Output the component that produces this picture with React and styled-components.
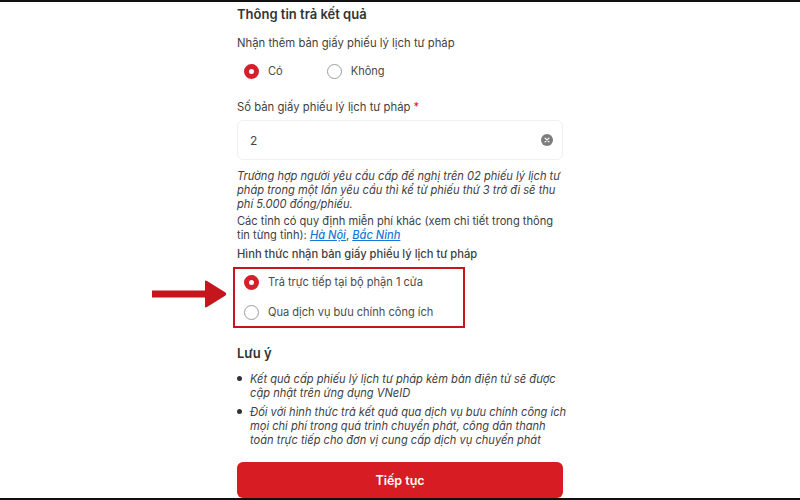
import React from 'react'
import styled, { createGlobalStyle } from 'styled-components'

const Global = createGlobalStyle`
  html, body { margin: 0; padding: 0; background: #fff; }
  body { font-family: Inter, "Noto Sans", "Liberation Sans", sans-serif; color: #3a3a3c; }
`

const Screen = styled.div`
  position: relative;
  width: 800px;
  height: 500px;
  overflow: hidden;
  background: #fff;
  box-sizing: border-box;
  border-top: 2px solid #111;
  border-bottom: 2px solid #111;
`

const Column = styled.div`
  width: 326px;
  margin-left: 237px;
`

const Heading = styled.div`
  font-size: 13px;
  line-height: 18px;
  font-weight: 600;
  color: #333;
  margin-top: ${p => p.$top}px;
`

const Label = styled.div`
  font-size: ${p => p.$strong ? 11.2 : 11.3}px;
  line-height: 16px;
  font-weight: ${p => p.$strong ? 500 : 400};
  color: #3f3f41;
  margin-top: ${p => p.$top}px;
`

const Star = styled.span`
  color: #d71920;
`

const RadioRow = styled.div`
  display: flex;
  gap: 44px;
  padding-left: 7px;
  margin-top: 12px;
`

const RadioStack = styled.div`
  position: relative;
  display: flex;
  flex-direction: column;
  gap: 14px;
  padding-left: 7px;
  margin-top: 12px;
`

const Option = styled.div`
  display: flex;
  align-items: center;
  gap: 9px;
  font-size: 11.05px;
  line-height: 16px;
  color: #4a4a4c;
`

const Dot = styled.span`
  width: 15px;
  height: 15px;
  border-radius: 50%;
  box-sizing: border-box;
  flex: none;
  background: #fff;
  border: ${p => p.$on ? '5px solid #d3202a' : '1px solid #9c9c9c'};
`

const Field = styled.div`
  display: flex;
  align-items: center;
  justify-content: space-between;
  height: 40px;
  box-sizing: border-box;
  margin-top: 5px;
  padding: 0 9px 0 12px;
  border: 1px solid #efefef;
  border-radius: 6px;
  font-size: 12px;
  color: #444;
`

const Note = styled.div`
  font-size: 11.12px;
  line-height: 14px;
  white-space: nowrap;
  color: #404042;
  margin-top: ${p => p.$top}px;
  font-style: ${p => p.$plain ? 'normal' : 'italic'};
`

const Link = styled.a`
  color: #1479d6;
  font-style: italic;
  font-weight: 500;
  text-decoration: underline;
`

const Highlight = styled.div`
  position: absolute;
  left: -4px;
  top: -7px;
  width: 232px;
  height: 61px;
  box-sizing: border-box;
  border: 2.5px solid #c4161c;
`

const Arrow = styled.svg`
  position: absolute;
  left: 152px;
  top: 278px;
`

const Bullets = styled.ul`
  list-style: none;
  margin: 10px 0 0;
  padding: 0;
  display: flex;
  flex-direction: column;
  gap: 5px;
`

const Bullet = styled.li`
  position: relative;
  padding-left: 13px;
  font-size: 11.1px;
  line-height: 14px;
  font-style: italic;
  white-space: nowrap;
  color: #404042;

  &::before {
    content: '';
    position: absolute;
    left: 0;
    top: 4px;
    width: 5px;
    height: 5px;
    border-radius: 50%;
    background: #333;
  }
`

const Submit = styled.button`
  display: block;
  width: 100%;
  height: 36px;
  margin-top: 15px;
  border: 0;
  border-radius: 6px;
  background: #d71c23;
  color: #fff;
  font-family: inherit;
  font-size: 12.5px;
  font-weight: 600;
`

function ClearIcon() {
  return (
    <svg width="12" height="12" viewBox="0 0 13 13">
      <circle cx="6.5" cy="6.5" r="6.5" fill="#7d7d7f" />
      <path d="M4.4 4.4l4.2 4.2M8.6 4.4l-4.2 4.2" stroke="#fff" strokeWidth="1.3" strokeLinecap="round" />
    </svg>
  )
}

export default function App() {
  return (
    <Screen>
      <Global />
      <Column>
        <Heading $top={3}>Thông tin trả kết quả</Heading>
        <Label $top={12}>Nhận thêm bản giấy phiếu lý lịch tư pháp</Label>
        <RadioRow>
          <Option><Dot $on />Có</Option>
          <Option><Dot />Không</Option>
        </RadioRow>
        <Label $top={20}>Số bản giấy phiếu lý lịch tư pháp <Star>*</Star></Label>
        <Field>
          2
          <ClearIcon />
        </Field>
        <Note $top={9}>
          Trường hợp người yêu cầu cấp đề nghị trên 02 phiếu lý lịch tư<br />
          pháp trong một lần yêu cầu thì kể từ phiếu thứ 3 trở đi sẽ thu<br />
          phí 5.000 đồng/phiếu.
        </Note>
        <Note $plain $top={3}>
          Các tỉnh có quy định miễn phí khác (xem chi tiết trong thông<br />
          tin từng tỉnh): <Link>Hà Nội</Link>, <Link>Bắc Ninh</Link>
        </Note>
        <Label $strong $top={4}>Hình thức nhận bản giấy phiếu lý lịch tư pháp</Label>
        <RadioStack>
          <Highlight />
          <Option><Dot $on />Trả trực tiếp tại bộ phận 1 cửa</Option>
          <Option><Dot />Qua dịch vụ bưu chính công ích</Option>
        </RadioStack>
        <Heading $top={24}>Lưu ý</Heading>
        <Bullets>
          <Bullet>Kết quả cấp phiếu lý lịch tư pháp kèm bản điện tử sẽ được<br />cập nhật trên ứng dụng VNeID</Bullet>
          <Bullet>Đối với hình thức trả kết quả qua dịch vụ bưu chính công ích<br />mọi chi phí trong quá trình chuyển phát, công dân thanh<br />toán trực tiếp cho đơn vị cung cấp dịch vụ chuyển phát</Bullet>
        </Bullets>
        <Submit>Tiếp tục</Submit>
      </Column>
      <Arrow width="75" height="28" viewBox="0 0 75 28">
        <path d="M0 10.5H53V1.5Q53 0 55 1L73.5 12.5Q75 14 73.5 15.5L55 27Q53 28 53 26.5V17.5H0Z" fill="#c4161c" />
      </Arrow>
    </Screen>
  )
}
